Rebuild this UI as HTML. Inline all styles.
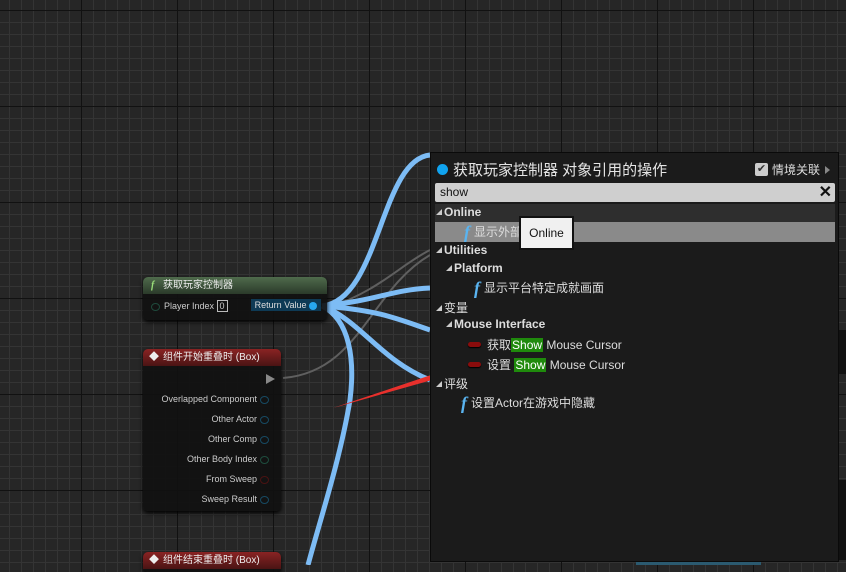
<!DOCTYPE html>
<html><head><meta charset="utf-8"><style>
*{margin:0;padding:0;box-sizing:border-box}
body{width:846px;height:565px;overflow:hidden;position:relative;font-family:"Liberation Sans","Noto Sans CJK SC",sans-serif;
background-color:#262626;
background-image:
linear-gradient(90deg,#111 1px,transparent 1px),
linear-gradient(0deg,#111 1px,transparent 1px),
linear-gradient(90deg,#343434 1px,transparent 1px),
linear-gradient(0deg,#343434 1px,transparent 1px);
background-size:96px 96px,96px 96px,12px 12px,12px 12px;
background-position:81px 0,0 11px,9px 0,0 11px;}
.node{position:absolute;background:rgba(16,16,16,.92);border-radius:5px;box-shadow:0 2px 4px #000;color:#ddd;font-size:9px}
.hd{height:17px;border-radius:5px 5px 0 0;color:#eee;font-size:10px;line-height:17px;padding-left:20px;position:relative}
.pin{position:absolute;right:12px;font-size:9px;color:#ccc;text-align:right}
.pin i{display:inline-block;width:9px;height:8px;border:1.5px solid #174a63;border-radius:50%;margin-left:3px;vertical-align:middle}
#panel{position:absolute;left:430px;top:152px;width:409px;height:410px;background:#1b1b1b;border:1px solid #0a0a0a;color:#ddd}
.row{position:absolute;left:0;font-size:12px;white-space:nowrap;color:#ddd}
.tri{display:inline-block;width:0;height:0;border-left:6px solid transparent;border-bottom:6px solid #ccc;margin-right:2px;vertical-align:1px}
.f{color:#5ab4f0;font-style:italic;font-family:"Liberation Serif",serif;font-size:18px;font-weight:bold;vertical-align:-2px;margin-right:4px}
.var{display:inline-block;width:13px;height:5px;border-radius:3px;background:#8a0c0c;box-shadow:0 1px 1px #000;margin-right:6px;vertical-align:2px}
.hl{background:#1f8a0c;color:#fff;padding:0 1px}
</style></head><body>
<div style="position:absolute;left:0;top:106px;width:846px;height:1px;background:#111"></div>
<svg width="846" height="565" style="position:absolute;left:0;top:0">
<g fill="none" stroke="#5f5f5f" stroke-width="2">
<path d="M283 378 C360 372 370 290 430 255"/>
<path d="M330 307 C380 290 400 265 430 250"/>
</g>
<g fill="none" stroke="#7dbcf5" stroke-width="5">
<path d="M322 306 C380 300 380 160 430 155"/>
<path d="M322 306 C380 300 390 290 430 288"/>
<path d="M322 306 C380 310 400 320 430 330"/>
<path d="M322 306 C360 320 380 360 430 380"/>
<path d="M322 306 C350 320 355 360 350 400 C340 460 320 520 308 565"/>
</g>
<path d="M333 408 L440 372 L448 368 L432 380 Z" fill="#e8302c"/>
</svg>

<div class="node" style="left:143px;top:277px;width:184px;height:43px">
<div class="hd" style="background:linear-gradient(#4f6b4c,#2b3a2a)"><span style="position:absolute;left:8px;color:#9be07a;font-style:italic;font-family:'Liberation Serif',serif;font-weight:bold">f</span>获取玩家控制器</div>
<div style="position:absolute;left:8px;top:24px;font-size:9px;color:#ccc"><i style="display:inline-block;width:9px;height:8px;border:1.5px solid #1f4a3c;border-radius:50%;vertical-align:middle;margin-right:4px"></i>Player Index <span style="border:1px solid #bbb;padding:0 2px">0</span></div>
<div style="position:absolute;right:6px;top:22px;background:#0e3a55;padding:1px 4px;font-size:9px;color:#ddd">Return Value <i style="display:inline-block;width:8px;height:8px;background:#27a7ef;border-radius:50%;vertical-align:middle"></i></div>
</div>

<div class="node" style="left:143px;top:349px;width:138px;height:162px">
<div class="hd" style="background:linear-gradient(#8a2323,#4a1414)"><span style="position:absolute;left:6px;font-size:10px">◆</span>组件开始重叠时 (Box)</div>
<div style="position:absolute;right:6px;top:25px;width:0;height:0;border-left:9px solid #888;border-top:5px solid transparent;border-bottom:5px solid transparent"></div>
<div class="pin" style="top:45px">Overlapped Component<i></i></div>
<div class="pin" style="top:65px">Other Actor<i></i></div>
<div class="pin" style="top:85px">Other Comp<i></i></div>
<div class="pin" style="top:105px">Other Body Index<i style="border-color:#1e4d3e"></i></div>
<div class="pin" style="top:125px">From Sweep<i style="border-color:#4a1212"></i></div>
<div class="pin" style="top:145px">Sweep Result<i></i></div>
</div>
<div class="node" style="left:143px;top:552px;width:138px;height:20px">
<div class="hd" style="background:linear-gradient(#8a2323,#4a1414)"><span style="position:absolute;left:6px">◆</span>组件结束重叠时 (Box)</div></div>

<div style="position:absolute;left:838px;top:330px;width:8px;height:44px;background:#111"></div>
<div style="position:absolute;left:838px;top:480px;width:8px;height:80px;background:#111"></div>
<div style="position:absolute;left:636px;top:560px;width:125px;height:5px;background:#2b5a70"></div>

<div id="panel">
<div style="position:absolute;left:6px;top:11px;width:11px;height:11px;border-radius:50%;background:#10a3ef"></div>
<div style="position:absolute;left:22px;top:6px;font-size:15px;color:#e5e5e5">获取玩家控制器 对象引用的操作</div>
<div style="position:absolute;left:324px;top:10px;width:13px;height:13px;background:#ccc;border-radius:2px;color:#333;font-size:11px;line-height:13px;text-align:center">✔</div>
<div style="position:absolute;left:341px;top:8px;font-size:12px;color:#ddd">情境关联</div>
<div style="position:absolute;left:394px;top:13px;width:0;height:0;border-left:5px solid #888;border-top:4px solid transparent;border-bottom:4px solid transparent"></div>
<div style="position:absolute;left:4px;top:30px;width:400px;height:19px;background:#cfcfcf;border-radius:2px;color:#111;font-size:12px;line-height:19px;padding-left:5px">show<span style="position:absolute;right:3px;top:0;font-size:16px;font-weight:bold">✕</span></div>
<div style="position:absolute;left:4px;top:51px;width:400px;height:18px;background:#2e2e2e"></div>
<div class="row" style="left:5px;top:52px;font-weight:bold"><span class="tri"></span>Online</div>
<div style="position:absolute;left:4px;top:69px;width:400px;height:20px;background:#8a8a8a"></div>
<div class="row" style="left:33px;top:69px"><span class="f">f</span>显示外部</div>
<div style="position:absolute;left:88px;top:63px;width:55px;height:34px;background:#f0f0f0;border:2px solid #111;color:#111;font-size:12px;line-height:30px;text-align:center">Online</div>
<div class="row" style="left:5px;top:90px;font-weight:bold"><span class="tri"></span>Utilities</div>
<div class="row" style="left:15px;top:108px;font-weight:bold"><span class="tri"></span>Platform</div>
<div class="row" style="left:43px;top:125px"><span class="f">f</span>显示平台特定成就画面</div>
<div class="row" style="left:5px;top:146px"><span class="tri"></span>变量</div>
<div class="row" style="left:15px;top:164px;font-weight:bold"><span class="tri"></span>Mouse Interface</div>
<div class="row" style="left:37px;top:183px"><span class="var"></span>获取<span class="hl">Show</span> Mouse Cursor</div>
<div class="row" style="left:37px;top:203px"><span class="var"></span>设置 <span class="hl">Show</span> Mouse Cursor</div>
<div class="row" style="left:5px;top:222px"><span class="tri"></span>评级</div>
<div class="row" style="left:30px;top:240px"><span class="f">f</span>设置Actor在游戏中隐藏</div>
</div>
</body></html>
